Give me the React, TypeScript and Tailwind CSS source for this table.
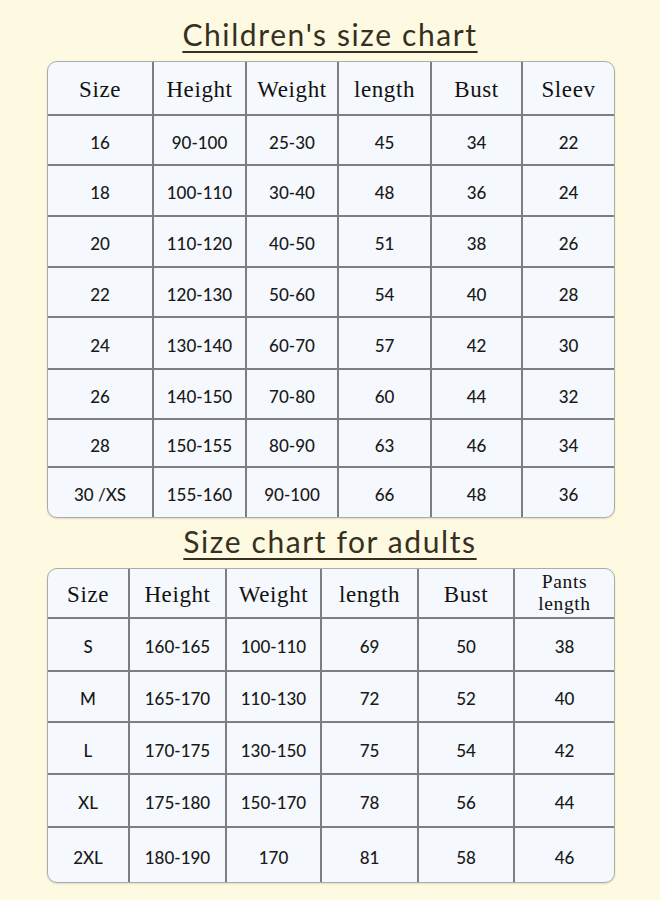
import React from 'react'

type Chart = {
  cols: string
  heads: React.ReactNode[]
  rowHeights: number[]
  rows: string[][]
}

const kids: Chart = {
  cols: 'grid-cols-[106px_93px_92px_93px_91px_91px]',
  heads: ['Size', 'Height', 'Weight', 'length', 'Bust', 'Sleev'],
  rowHeights: [54, 50, 51, 51, 50, 52, 50, 48, 49],
  rows: [
    ['16', '90-100', '25-30', '45', '34', '22'],
    ['18', '100-110', '30-40', '48', '36', '24'],
    ['20', '110-120', '40-50', '51', '38', '26'],
    ['22', '120-130', '50-60', '54', '40', '28'],
    ['24', '130-140', '60-70', '57', '42', '30'],
    ['26', '140-150', '70-80', '60', '44', '32'],
    ['28', '150-155', '80-90', '63', '46', '34'],
    ['30 /XS', '155-160', '90-100', '66', '48', '36'],
  ],
}

const adults: Chart = {
  cols: 'grid-cols-[82px_97px_95px_97px_96px_99px]',
  heads: [
    'Size',
    'Height',
    'Weight',
    'length',
    'Bust',
    <span className="block text-[19.5px] leading-[22px] -mt-[5px]">
      <span className="block">Pants</span>
      <span className="block">length</span>
    </span>,
  ],
  rowHeights: [50, 53, 51, 52, 53, 54],
  rows: [
    ['S', '160-165', '100-110', '69', '50', '38'],
    ['M', '165-170', '110-130', '72', '52', '40'],
    ['L', '170-175', '130-150', '75', '54', '42'],
    ['XL', '175-180', '150-170', '78', '56', '44'],
    ['2XL', '180-190', '170', '81', '58', '46'],
  ],
}

function Title({ children }: { children: React.ReactNode }) {
  return (
    <h1 className="text-center font-['Lato',sans-serif] font-normal text-[30px] leading-[36px] tracking-[1.6px] text-[#35301f] underline decoration-[1.5px] underline-offset-[5px]">
      {children}
    </h1>
  )
}

function SizeTable({ chart }: { chart: Chart }) {
  const { cols, heads, rowHeights, rows } = chart
  return (
    <div className="w-[568px] ml-[47px] rounded-[10px] border border-[#ababab] bg-[#f5f9fd] overflow-hidden shadow-[0_1px_2px_rgba(0,0,0,0.12)]">
      {/* header */}
      <div
        className={`grid ${cols} border-b-2 border-[#7e7e7e]`}
        style={{ height: rowHeights[0] }}
      >
        {heads.map((h, i) => (
          <div
            key={i}
            className={`flex items-center justify-center pt-[5px] text-center font-['Liberation_Serif',serif] text-[23px] tracking-[0.6px] text-[#111] ${
              i < heads.length - 1 ? 'border-r-2 border-[#7e7e7e]' : ''
            }`}
          >
            {h}
          </div>
        ))}
      </div>
      {rows.map((r, ri) => (
        <div
          key={ri}
          className={`grid ${cols} ${ri < rows.length - 1 ? 'border-b-2 border-[#7e7e7e]' : ''}`}
          style={{ height: rowHeights[ri + 1] }}
        >
          {r.map((c, ci) => (
            <div
              key={ci}
              className={`flex items-center justify-center pt-[5px] font-['Lato',sans-serif] font-medium text-[17px] text-[#1a1a1a] ${
                ci < r.length - 1 ? 'border-r-2 border-[#7e7e7e]' : ''
              }`}
            >
              {c}
            </div>
          ))}
        </div>
      ))}
    </div>
  )
}

export default function App() {
  return (
    <div className="w-[660px] h-[900px] bg-[#fef9e1] pt-[16px]">
      <Title>Children's size chart</Title>
      <div className="mt-[9px]">
        <SizeTable chart={kids} />
      </div>
      <div className="mt-[5px]">
        <Title>Size chart for adults</Title>
      </div>
      <div className="mt-[9px]">
        <SizeTable chart={adults} />
      </div>
    </div>
  )
}
